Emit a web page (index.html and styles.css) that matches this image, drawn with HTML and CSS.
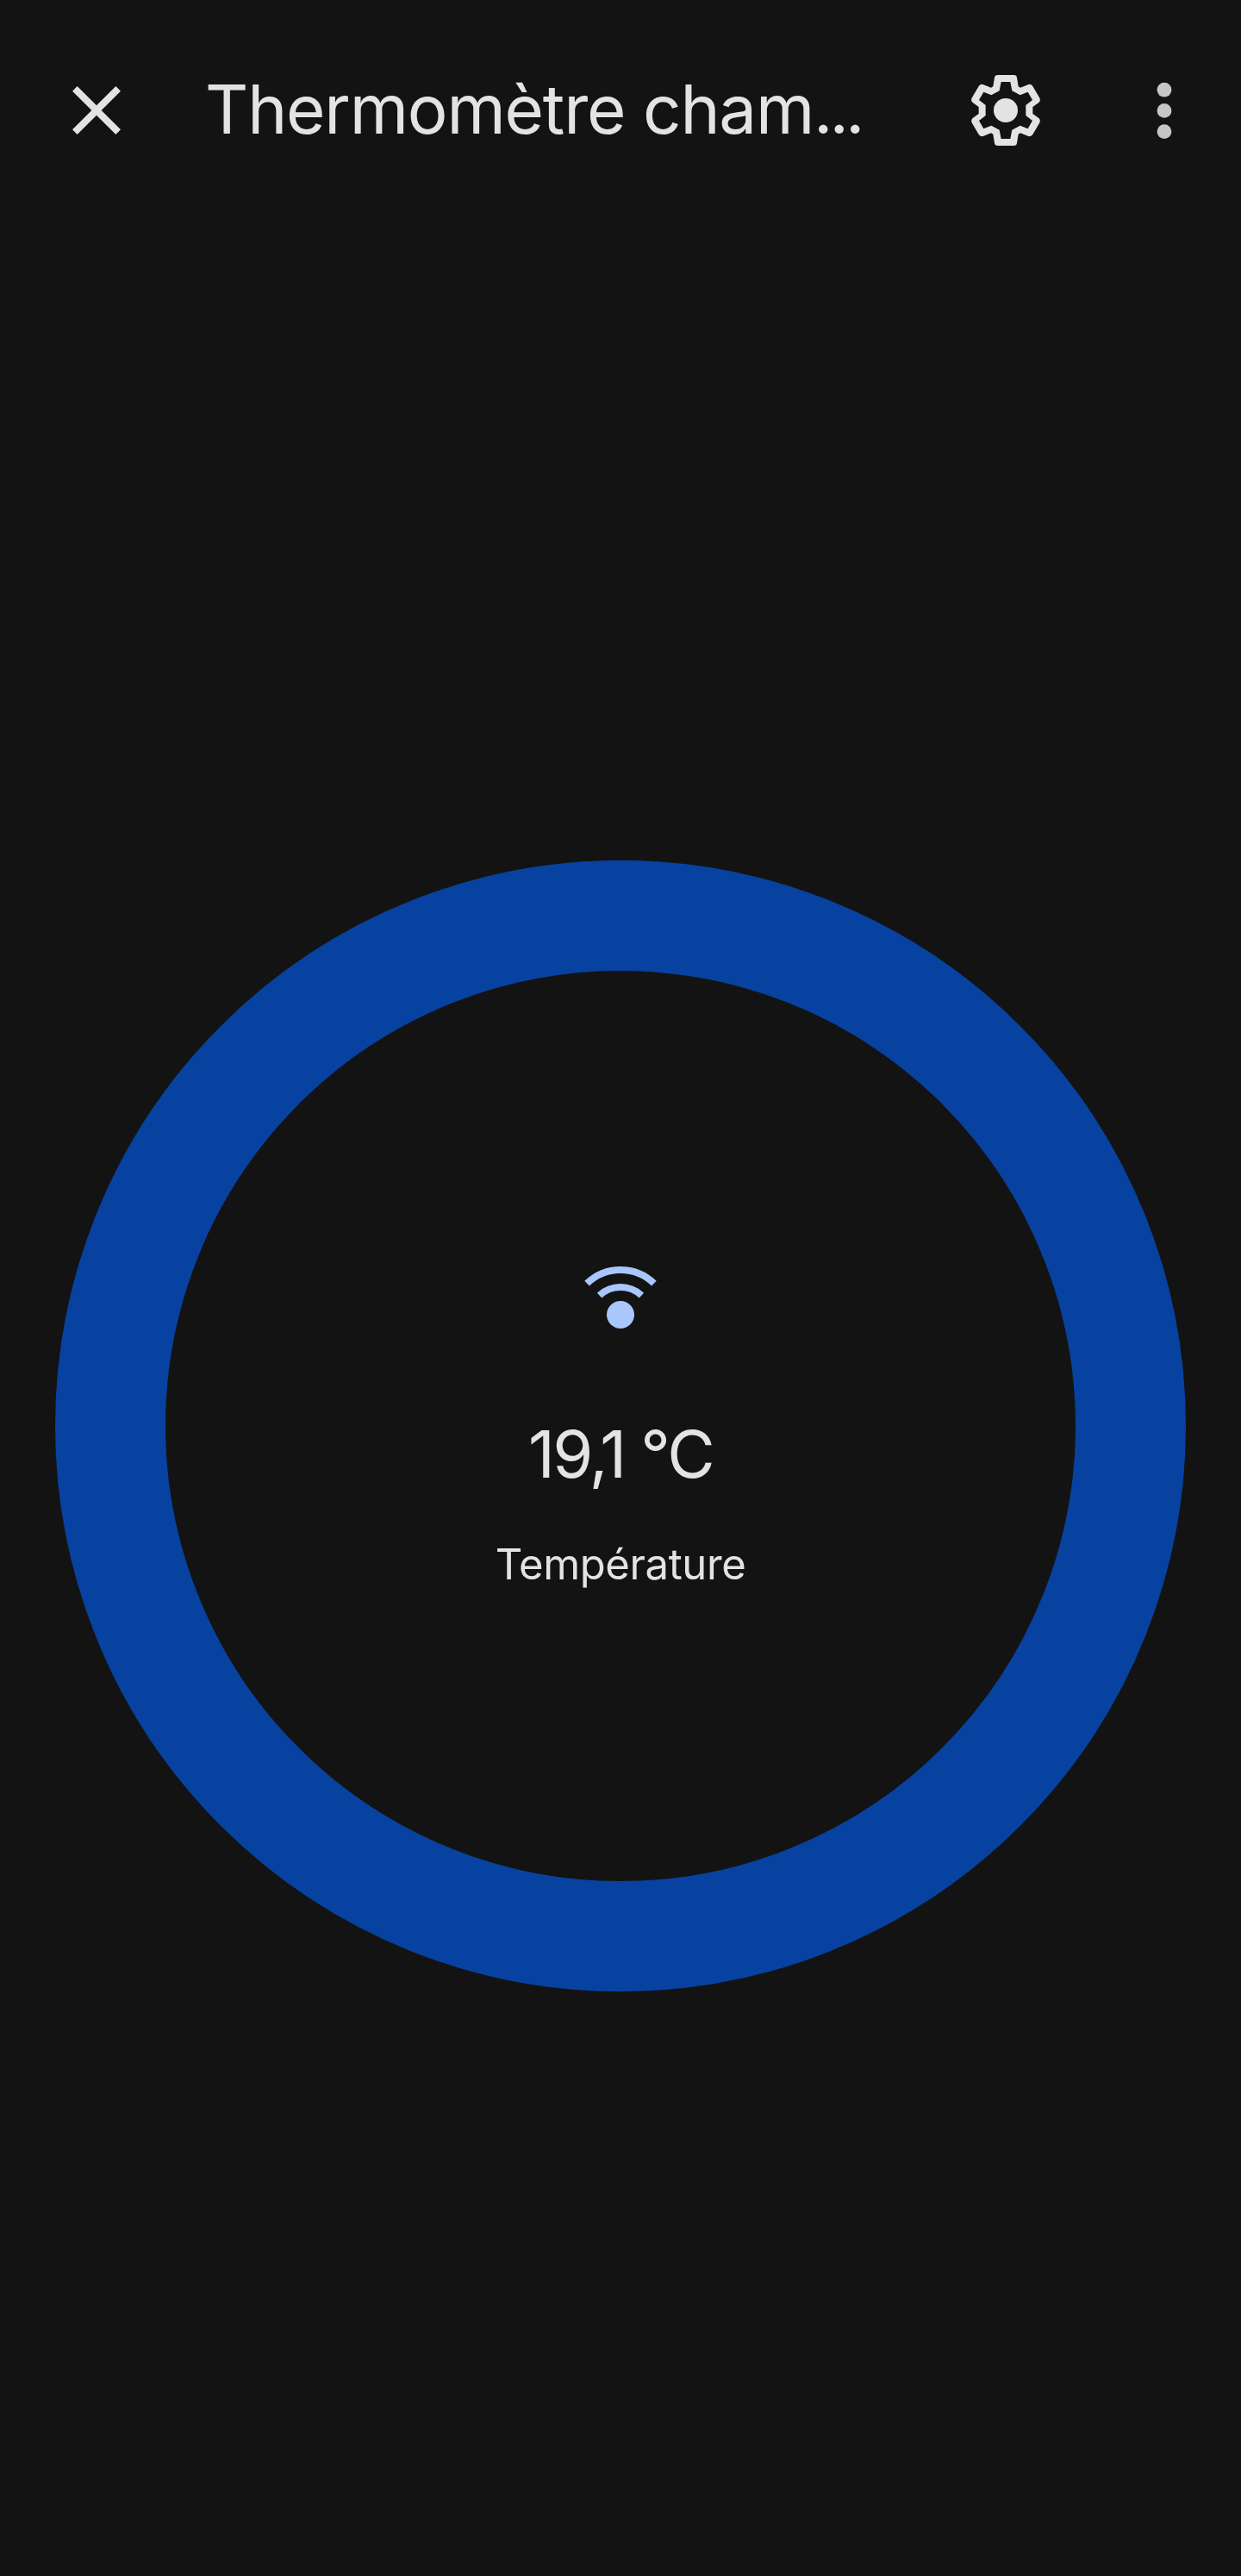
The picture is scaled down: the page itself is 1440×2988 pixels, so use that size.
FILE: index.html
```html
<!DOCTYPE html>
<html lang="fr">
<head>
    <meta charset="utf-8">
    <meta name="viewport" content="width=device-width, initial-scale=1">
    <title>Thermomètre chambre</title>
    <link rel="stylesheet" href="styles.css">
</head>
<body>
    <header class="toolbar">
        <button class="icon-button" aria-label="Fermer">
            <svg class="icon" viewBox="0 0 24 24">
                <path d="M19 6.41L17.59 5 12 10.59 6.41 5 5 6.41 10.59 12 5 17.59 6.41 19 12 13.41 17.59 19 19 17.59 13.41 12z"/>
            </svg>
        </button>
        <h1 class="title">Thermomètre cham<span class="dots">...</span></h1>
        <button class="icon-button settings" aria-label="Paramètres">
            <svg class="icon" viewBox="-144 -144 288 288">
                <path fill-rule="evenodd" d="M-28 -123H28Q38 -123 39 -114L44 -83 51 -79 79 -90Q89 -92 94 -84L119 -41Q122 -33 115 -27L94 -12V12L115 27Q122 33 119 41L94 84Q89 92 79 90L51 79 44 83 39 114Q38 123 28 123H-28Q-38 123 -39 114L-44 83 -51 79 -79 90Q-89 92 -94 84L-119 41Q-122 33 -115 27L-94 12V-12L-115 -27Q-122 -33 -119 -41L-94 -84Q-89 -92 -79 -90L-51 -79 -44 -83 -39 -114Q-38 -123 -28 -123Z
                    M-16 -99L-22 -68 -50 -53 -77 -64 -93 -36 -70 -18V18L-93 36 -77 64 -50 53 -22 68 -16 99H16L22 68 50 53 77 64 93 36 70 18V-18L93 -36 77 -64 50 -53 22 -68 16 -99Z"/>
                <circle r="42"/>
            </svg>
        </button>
        <button class="icon-button more" aria-label="Plus d'options">
            <svg class="icon" viewBox="0 0 96 96">
                <circle cx="48" cy="24.2" r="8.4"/>
                <circle cx="48" cy="48.4" r="8.4"/>
                <circle cx="48" cy="72.6" r="8.4"/>
            </svg>
        </button>
    </header>

    <main class="content">
        <div class="dial">
            <svg class="sensor-icon" viewBox="0 0 96 96">
                <path class="wave" d="M9.1 27.7A56 56 0 0 1 86.9 27.7"/>
                <path class="wave" d="M23.6 41.6A36 36 0 0 1 72.4 41.6"/>
                <circle cx="48" cy="64" r="16"/>
            </svg>
            <div class="value">19,1 °C</div>
            <div class="label">Température</div>
        </div>
    </main>
</body>
</html>
```

FILE: styles.css
```css
* {
    box-sizing: border-box;
}

body {
    margin: 0;
    min-height: 2988px;
    display: flex;
    flex-direction: column;
    background: #131313;
    color: #e3e3e3;
    font-family: Inter, Roboto, sans-serif;
}

.toolbar {
    display: flex;
    align-items: center;
    height: 256px;
    padding: 0 41px 0 64px;
}

.icon-button {
    flex: none;
    width: 96px;
    height: 96px;
    padding: 0;
    border: none;
    background: none;
    color: #e3e3e3;
}

.icon {
    display: block;
    width: 96px;
    height: 96px;
    fill: currentColor;
}

.title {
    flex: 1;
    margin: 0;
    padding: 0 0 2px 78px;
    font-size: 78px;
    line-height: 96px;
    font-weight: 400;
    letter-spacing: -1.2px;
    white-space: nowrap;
}

.dots {
    letter-spacing: -4px;
}

.more {
    margin-left: 88px;
    color: #c4c7c5;
}

.content {
    display: flex;
    justify-content: center;
    padding-top: 742px;
}

.dial {
    display: flex;
    flex-direction: column;
    align-items: center;
    width: 1312px;
    height: 1312px;
    padding-top: 335px;
    border: 128px solid #0842a0;
    border-radius: 50%;
}

.sensor-icon {
    width: 96px;
    height: 96px;
    fill: #a8c7fa;
}

.wave {
    fill: none;
    stroke: #a8c7fa;
    stroke-width: 8;
}

.value {
    margin-top: 81px;
    font-size: 76px;
    line-height: 96px;
    letter-spacing: -2.7px;
}

.label {
    margin-top: 49px;
    font-size: 49px;
    line-height: 64px;
    letter-spacing: -0.4px;
}
```
